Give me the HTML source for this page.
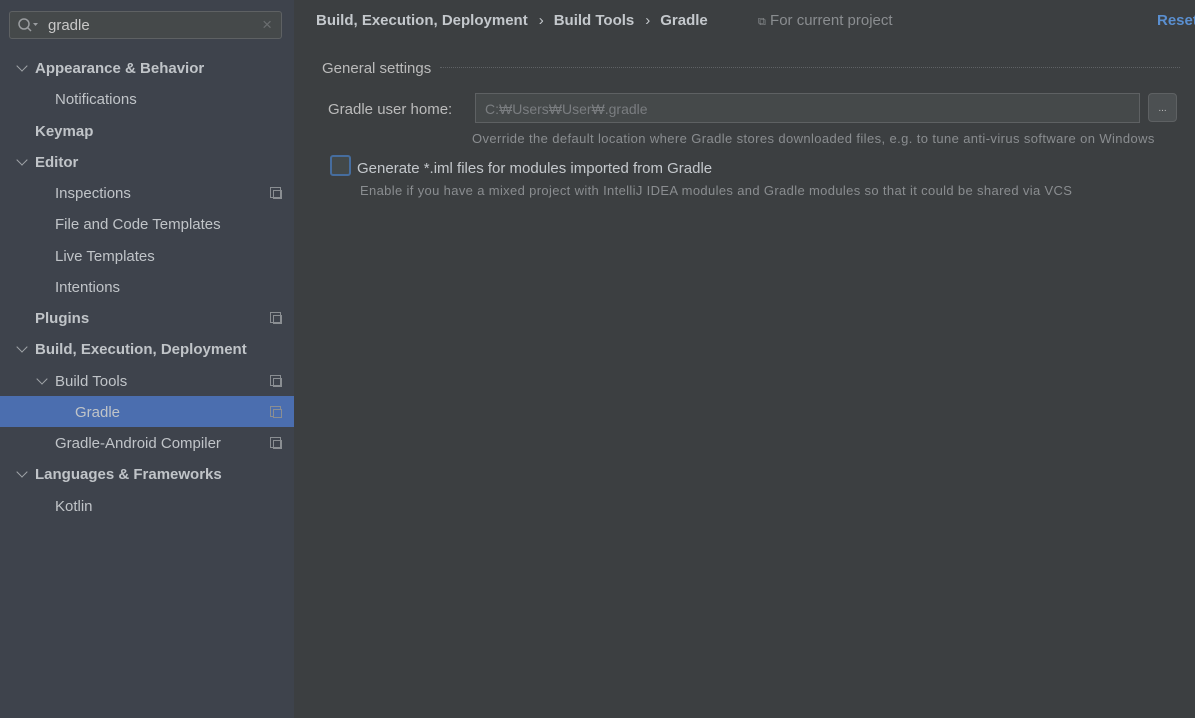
<!DOCTYPE html>
<html><head><style>
body{margin:0;width:1195px;height:718px;overflow:hidden;background:#3c3f41;font-family:"Liberation Sans",sans-serif;color:#bbbbbb;position:relative}
.side{position:absolute;left:0;top:0;width:294px;height:718px;background:#3e434c}
.search{position:absolute;left:9px;top:11px;width:273px;height:28px;border:1px solid #5e6163;border-radius:3px;background:#45494a;box-sizing:border-box}
.search .t{position:absolute;left:38px;top:5px;font-size:15px;color:#c8c8c8}
.search .x{position:absolute;right:9px;top:3px;font-size:17px;color:#6b6e70}
.row{position:absolute;left:0;width:294px;height:31px;font-size:15px;line-height:33px;color:#c0c4c8}
.b{font-weight:bold}
.sel{background:#4b6eaf}
.chev{position:absolute;width:7px;height:7px;border-right:1.5px solid #a0a4a8;border-bottom:1.5px solid #a0a4a8;transform:rotate(45deg);top:10px}
.ic{position:absolute;left:270px;top:10px;width:9px;height:9px;border:1px solid #8a8e92}
.ic:after{content:"";position:absolute;left:2px;top:2px;width:7px;height:7px;border:1px solid #8a8e92;background:inherit}
</style></head><body>
<div class="side">
<div class="search"><svg style="position:absolute;left:7px;top:5px" width="24" height="16"><circle cx="7" cy="7" r="5" stroke="#9a9da0" stroke-width="1.5" fill="none"/><line x1="10.5" y1="10.5" x2="14" y2="14" stroke="#9a9da0" stroke-width="1.5"/><path d="M16 6 L21 6 L18.5 9Z" fill="#9a9da0"/></svg><span class="t">gradle</span><span class="x">×</span></div>
<div class="row b" style="top:52px"><i class="chev" style="left:18px"></i><span style="position:absolute;left:35px">Appearance &amp; Behavior</span></div>
<div class="row" style="top:83px"><span style="position:absolute;left:55px">Notifications</span></div>
<div class="row b" style="top:115px"><span style="position:absolute;left:35px">Keymap</span></div>
<div class="row b" style="top:146px"><i class="chev" style="left:18px"></i><span style="position:absolute;left:35px">Editor</span></div>
<div class="row" style="top:177px"><span style="position:absolute;left:55px">Inspections</span><i class="ic"></i></div>
<div class="row" style="top:208px"><span style="position:absolute;left:55px">File and Code Templates</span></div>
<div class="row" style="top:240px"><span style="position:absolute;left:55px">Live Templates</span></div>
<div class="row" style="top:271px"><span style="position:absolute;left:55px">Intentions</span></div>
<div class="row b" style="top:302px"><span style="position:absolute;left:35px">Plugins</span><i class="ic"></i></div>
<div class="row b" style="top:333px"><i class="chev" style="left:18px"></i><span style="position:absolute;left:35px">Build, Execution, Deployment</span></div>
<div class="row" style="top:365px"><i class="chev" style="left:38px"></i><span style="position:absolute;left:55px">Build Tools</span><i class="ic"></i></div>
<div class="row sel" style="top:396px"><span style="position:absolute;left:75px">Gradle</span><i class="ic" style="background:#4b6eaf"></i></div>
<div class="row" style="top:427px"><span style="position:absolute;left:55px">Gradle-Android Compiler</span><i class="ic"></i></div>
<div class="row b" style="top:458px"><i class="chev" style="left:18px"></i><span style="position:absolute;left:35px">Languages &amp; Frameworks</span></div>
<div class="row" style="top:490px"><span style="position:absolute;left:55px">Kotlin</span></div>
</div>
<div style="position:absolute;left:316px;top:12px;font-size:15px;font-weight:bold;color:#c4c8cc;white-space:nowrap">Build, Execution, Deployment<span style="font-weight:normal;margin:0 10px 0 11px">›</span>Build Tools<span style="font-weight:normal;margin:0 10px 0 11px">›</span>Gradle</div>
<div style="position:absolute;left:758px;top:12px;font-size:15px;color:#8a8d90"><span style="font-size:11px">⧉</span> For current project</div>
<div style="position:absolute;left:1157px;top:12px;font-size:15px;font-weight:bold;color:#5a8fd0">Reset</div>
<div style="position:absolute;left:322px;top:60px;font-size:15px;color:#bbbbbb">General settings</div>
<div style="position:absolute;left:440px;top:67px;width:740px;border-top:1px dotted #5f6265"></div>
<div style="position:absolute;left:328px;top:101px;font-size:15px;color:#bbbbbb">Gradle user home:</div>
<div style="position:absolute;left:475px;top:93px;width:665px;height:30px;box-sizing:border-box;border:1px solid #5e6163;background:#45494a;font-size:14px;color:#7a7d80;padding:7px 9px">C:₩Users₩User₩.gradle</div>
<div style="position:absolute;left:1148px;top:93px;width:29px;height:29px;box-sizing:border-box;border:1px solid #5e6163;border-radius:4px;background:#4c5052;font-size:10px;color:#bbb;text-align:center;line-height:30px">...</div>
<div style="position:absolute;left:472px;top:131px;font-size:13px;color:#8a8d90;letter-spacing:.39px">Override the default location where Gradle stores downloaded files, e.g. to tune anti-virus software on Windows</div>
<div style="position:absolute;left:330px;top:155px;width:21px;height:21px;box-sizing:border-box;border:2px solid #466d9e;border-radius:3px;background:#43494a"></div>
<div style="position:absolute;left:357px;top:160px;font-size:15px;color:#c4c8cc">Generate *.iml files for modules imported from Gradle</div>
<div style="position:absolute;left:360px;top:183px;font-size:13px;color:#8a8d90;letter-spacing:.35px">Enable if you have a mixed project with IntelliJ IDEA modules and Gradle modules so that it could be shared via VCS</div>
</body></html>
